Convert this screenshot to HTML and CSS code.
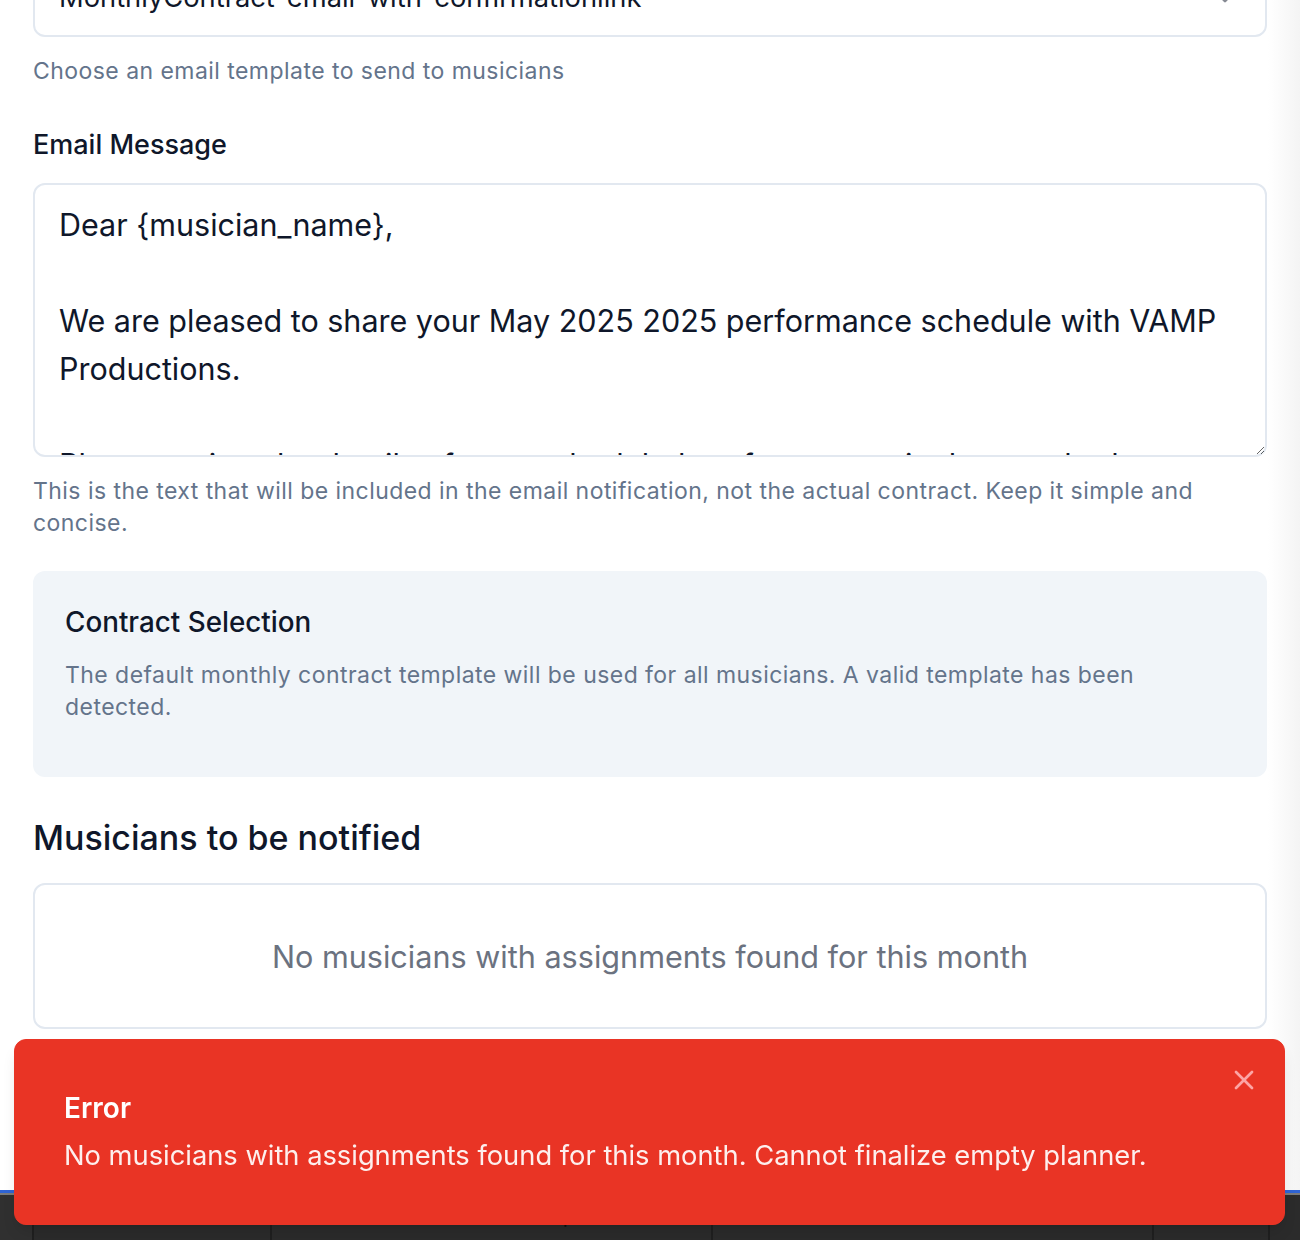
FILE: index.html
```html
<!DOCTYPE html>
<html lang="en">
<head>
<meta charset="utf-8">
<title>Finalize planner</title>
<link rel="stylesheet" href="styles.css">
</head>
<body>
<div class="dialog">
  <div class="form">
    <div class="select">
      <span class="select-value">MonthlyContract-email-with-confirmationlink</span>
      <svg class="chev" viewBox="0 0 24 24" width="32" height="32" fill="none" stroke="currentColor" stroke-width="2" stroke-linecap="round" stroke-linejoin="round"><path d="m6 9 6 6 6-6"/></svg>
    </div>
    <p class="helper helper-select">Choose an email template to send to musicians</p>

    <label class="label" for="msg">Email Message</label>
    <textarea id="msg" class="textarea">Dear {musician_name},

We are pleased to share your May 2025 2025 performance schedule with VAMP Productions.

Please review the details of your scheduled performances in the attached contract and confirm.</textarea>
    <p class="helper helper-msg">This is the text that will be included in the email notification, not the actual contract. Keep it simple and concise.</p>

    <div class="contract-box">
      <h4 class="contract-title">Contract Selection</h4>
      <p class="helper contract-desc">The default monthly contract template will be used for all musicians. A valid template has been detected.</p>
    </div>

    <h3 class="section-title">Musicians to be notified</h3>
    <div class="empty-box">No musicians with assignments found for this month</div>
  </div>
</div>
<div class="under">
  <div class="under-row">
    <div class="cell cell-a"></div>
    <div class="cell cell-b"><span>Total</span><span>$200.00</span></div>
    <div class="cell cell-c"></div>
    <div class="cell cell-d"></div>
  </div>
</div>

<div class="toast" role="alert">
  <div class="toast-title">Error</div>
  <div class="toast-desc">No musicians with assignments found for this month. Cannot finalize empty planner.</div>
  <button class="toast-close" aria-label="Close">
    <svg viewBox="0 0 24 24" width="32" height="32" fill="none" stroke="currentColor" stroke-width="2" stroke-linecap="round" stroke-linejoin="round"><path d="M18 6 6 18"/><path d="m6 6 12 12"/></svg>
  </button>
</div>
</body>
</html>
```
FILE: styles.css
```css
* { box-sizing: border-box; }
html, body { margin: 0; padding: 0; }
body {
  font-family: Inter, "Noto Sans", "Liberation Sans", sans-serif;
  color: #0f172a;
  background: #2e2e2e;
  width: 1300px;
  height: 1240px;
  overflow: hidden;
}
.dialog {
  height: 1193px;
  overflow: hidden;
  background: linear-gradient(to right, #ffffff 1268px, #f4f4f4 1300px);
  border-bottom: 3px solid #2f64d4;
  box-shadow: 0 2px 0 #7a7a7a;
  position: relative;
}
.form {
  padding: 0 33px;
  margin-top: -43px;
  display: flex;
  flex-direction: column;
}
.select {
  height: 80px;
  border: 2px solid #e2e8f0;
  border-radius: 12px;
  background: #fff;
  display: flex;
  align-items: center;
  justify-content: space-between;
  padding: 0 24px;
  font-size: 27.3px;
}
.chev { color: #0f172a; opacity: 0.5; }
.helper {
  margin: 0;
  font-size: 23px;
  line-height: 32px;
  color: #64748b;
  letter-spacing: 0.45px;
}
.helper-select { margin-top: 18px; }
.label {
  margin-top: 40px;
  font-size: 27px;
  line-height: 36px;
  font-weight: 500;
  color: #0f172a;
}
.textarea {
  margin-top: 20px;
  height: 274px;
  width: 100%;
  border: 2px solid #e2e8f0;
  border-radius: 12px;
  padding: 16px 24px;
  font-family: inherit;
  font-size: 30.5px;
  line-height: 48px;
  color: #0f172a;
  background: #fff;
  overflow: hidden;
  resize: vertical;
  outline: none;
}
.helper-msg { margin-top: 18px; }
.contract-box {
  margin-top: 32px;
  background: #f1f5f9;
  border-radius: 12px;
  padding: 33px 32px 54px;
}
.contract-title {
  margin: 0;
  font-size: 27.8px;
  line-height: 36px;
  font-weight: 500;
  color: #0f172a;
}
.contract-desc { margin-top: 19px; }
.section-title {
  margin: 37px 0 0;
  font-size: 34px;
  line-height: 48px;
  font-weight: 500;
  color: #0f172a;
}
.empty-box {
  margin-top: 21px;
  height: 146px;
  border: 2px solid #e2e8f0;
  border-radius: 12px;
  display: flex;
  align-items: center;
  justify-content: center;
  font-size: 30.6px;
  color: #6b7280;
}
.under {
  height: 47px;
  background: #303030;
  padding-left: 32px;
}
.under-row {
  display: grid;
  grid-template-columns: 238px 441px 441px 118px;
  height: 100%;
  background: #2b2b2b;
}
.cell { border-left: 2px solid #1f1f1f; height: 100%; }
.cell-d { border-right: 2px solid #1f1f1f; }
.cell-b {
  display: flex;
  justify-content: space-between;
  padding: 2px 20px 0 18px;
  font-size: 32px;
  line-height: 36px;
  font-weight: 700;
  color: #0d0d0d;
}
.toast {
  position: fixed;
  left: 14px;
  top: 1039px;
  width: 1271px;
  height: 186px;
  background: #e93425;
  border: 1px solid #e93425;
  border-radius: 12px;
  padding: 48px 64px 48px 49px;
  display: grid;
  gap: 8px;
  align-content: start;
  color: #fff;
  box-shadow: 0 10px 15px -3px rgba(0,0,0,0.1), 0 4px 6px -4px rgba(0,0,0,0.1);
}
.toast-title {
  font-size: 28px;
  line-height: 40px;
  font-weight: 600;
}
.toast-desc {
  font-size: 27.3px;
  line-height: 40px;
  opacity: 0.92;
}
.toast-close {
  position: absolute;
  top: 16px;
  right: 16px;
  padding: 8px;
  border: 0;
  background: transparent;
  color: #fca5a5;
  display: flex;
  cursor: pointer;
}
```
